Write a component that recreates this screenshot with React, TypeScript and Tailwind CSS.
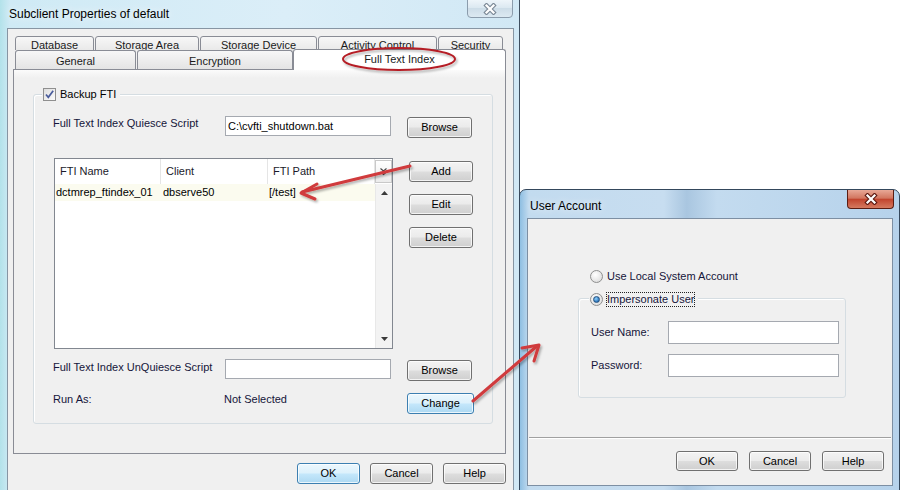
import React from 'react';

const Btn = ({ label, className = '', primary = false }: { label: string; className?: string; primary?: boolean }) => (
  <div
    className={`flex shrink-0 items-center justify-center rounded-[3px] border text-[11px] leading-[13px] text-black shadow-[inset_0_0_0_1px_rgba(255,255,255,0.75)] ${
      primary
        ? 'border-[#3c7fb1] bg-[linear-gradient(#ecf7fd,#dcf1fc_48%,#c4e7fb_52%,#add9f2)]'
        : 'border-[#707070] bg-[linear-gradient(#f3f3f3,#ebebeb_48%,#dddddd_52%,#cfcfcf)]'
    } ${className}`}
  >
    {label}
  </div>
);

const CloseGlyph = ({ active }: { active: boolean }) => (
  <svg width="14" height="12" viewBox="0 0 14 12">
    <path d="M3.5 2.5 L10.5 9.5 M10.5 2.5 L3.5 9.5" stroke={active ? '#5e1a12' : '#7b8896'} strokeWidth="4.4" strokeLinecap="square" />
    <path d="M3.5 2.5 L10.5 9.5 M10.5 2.5 L3.5 9.5" stroke="#ffffff" strokeWidth="2.2" strokeLinecap="square" />
  </svg>
);

const CheckBox = () => (
  <div className="flex h-[13px] w-[13px] shrink-0 items-center justify-center border border-[#8f8f8f] bg-[linear-gradient(135deg,#dedede,#fbfbfb)]">
    <svg width="11" height="11" viewBox="0 0 11 11">
      <path d="M2 5.5 L4.3 8.3 L9.2 1.8" stroke="#4a5c9c" strokeWidth="1.7" fill="none" />
    </svg>
  </div>
);

const Radio = ({ checked = false }: { checked?: boolean }) => (
  <div className="flex h-[13px] w-[13px] shrink-0 items-center justify-center rounded-full border border-[#8e8f8f] bg-[radial-gradient(circle_at_40%_35%,#ffffff,#d6d6d6)]">
    {checked && (
      <div className="h-[7px] w-[7px] rounded-full border border-[#26527f] bg-[radial-gradient(circle_at_40%_35%,#8fd3ff,#2c73b8_70%,#1c4f86)]" />
    )}
  </div>
);

const backTabs = [
  { label: 'Database', w: 'w-[79px]' },
  { label: 'Storage Area', w: 'w-[104px]' },
  { label: 'Storage Device', w: 'w-[117px]' },
  { label: 'Activity Control', w: 'w-[119px]' },
  { label: 'Security', w: 'w-[65px]' },
];

const MainWindow = () => (
  <div className="absolute left-0 top-0 flex h-[500px] w-[520px] flex-col border-r border-[#3f4f60] bg-[linear-gradient(90deg,#b3e2ea_0px,#cfeaf5_10px,#dbeef8_55%,#d1e8f5)]">
    <div className="relative flex h-[28px] shrink-0 items-center pl-[9px] text-[12px] leading-[14px] [text-shadow:0_0_8px_#ffffff]">
      Subclient Properties of default
      <div className="absolute -top-px right-[6px] flex h-[19px] w-[46px] items-center justify-center rounded-b-[4px] border border-[#8b9cac] bg-[linear-gradient(#eef5fa,#dae7f0_50%,#cddde8_50%,#dce9f2)]">
        <CloseGlyph active={false} />
      </div>
    </div>

    <div className="ml-[7px] w-[507px] flex-1 border border-[#8795a3] bg-[#f0f0f0] pl-[5px] pt-[7px]">
      {/* tab strip, back row */}
      <div className="flex h-[14px] gap-[1px] overflow-hidden pl-[2px]">
        {backTabs.map((t) => (
          <div
            key={t.label}
            className={`${t.w} h-[18px] shrink-0 rounded-t-[3px] border border-[#898c95] bg-[linear-gradient(#f7f7f7,#e6e6e6)] pt-[2px] text-center text-[#1a1a1a]`}
          >
            {t.label}
          </div>
        ))}
      </div>
      {/* tab strip, front row */}
      <div className="flex h-[19px] items-start gap-[1px] pl-[2px]">
        <div className="h-[19px] w-[121px] shrink-0 rounded-t-[3px] border border-b-0 border-[#898c95] bg-[linear-gradient(#f7f7f7,#e4e4e4)] pt-[4px] text-center text-[#1a1a1a]">
          General
        </div>
        <div className="h-[19px] w-[156px] shrink-0 rounded-t-[3px] border border-b-0 border-[#898c95] bg-[linear-gradient(#f7f7f7,#e4e4e4)] pt-[4px] text-center text-[#1a1a1a]">
          Encryption
        </div>
        <div className="relative z-10 -ml-[1px] -mt-[1px] h-[21px] w-[213px] shrink-0 rounded-t-[3px] border border-b-0 border-[#898c95] bg-white pt-[3px] text-center text-[#1a1a1a]">
          Full Text Index
        </div>
      </div>

      {/* tab panel */}
      <div className="h-[385px] w-[493px] border border-[#898c95] bg-[#f0f0f0] bg-[linear-gradient(#fbfbfb,#f0f0f0_8px)]">
        <div className="ml-[19px] mt-[24px] h-[330px] w-[460px] rounded-[3px] border border-[#d5dde2] shadow-[inset_1px_1px_0_#ffffff]">
          <div className="-mt-[7px] ml-[8px] flex h-[13px] w-fit items-center bg-[#f0f0f0] pl-[1px] pr-[4px]">
            <CheckBox />
            <span className="ml-[4px]">Backup FTI</span>
          </div>

          <div className="mt-[14px] flex h-[23px] pl-[19px]">
            <div className="w-[172px] shrink-0 pt-[2px] text-[#15153a]">Full Text Index Quiesce Script</div>
            <div className="mt-[1px] flex h-[20px] w-[166px] shrink-0 items-center border border-[#a5a9b0] bg-white pl-[2px]">
              C:\cvfti_shutdown.bat
            </div>
            <Btn label="Browse" className="ml-[16px] mt-[2px] h-[21px] w-[65px]" />
          </div>

          <div className="mt-[20px] flex pl-[19px]">
            <div className="ml-[1px] flex h-[191px] w-[339px] shrink-0 flex-col border border-[#828790] bg-white">
              <div className="flex h-[25px] shrink-0">
                <div className="flex w-[106px] items-center border-r border-[#e5e5e5] pl-[5px] text-[#1a1a2a]">FTI Name</div>
                <div className="flex w-[107px] items-center border-r border-[#e5e5e5] pl-[5px] text-[#1a1a2a]">Client</div>
                <div className="flex w-[107px] items-center border-r border-[#e5e5e5] pl-[5px] text-[#1a1a2a]">FTI Path</div>
                <div className="mt-[1px] flex h-[23px] w-[17px] items-center justify-center border border-[#c9c9c9] bg-[linear-gradient(#ffffff,#ececec)]">
                  <svg width="9" height="9" viewBox="0 0 9 9">
                    <path d="M1.5 1.5 L4.5 4 L7.5 1.5 M1.5 5 L4.5 7.5 L7.5 5" stroke="#444" strokeWidth="1.1" fill="none" />
                  </svg>
                </div>
              </div>
              <div className="flex flex-1">
                <div className="w-[320px]">
                  <div className="flex h-[17px] bg-[#fbfbef]">
                    <div className="flex w-[106px] items-center pl-[1px]">dctmrep_ftindex_01</div>
                    <div className="flex w-[107px] items-center pl-[2px]">dbserve50</div>
                    <div className="flex w-[107px] items-center pl-[1px]">[/test]</div>
                  </div>
                </div>
                <div className="flex w-[17px] flex-col items-center justify-between border-l border-[#e8e8e8] bg-[#f3f3f3] pb-[7px] pt-[7px]">
                  <svg width="7" height="4" viewBox="0 0 7 4">
                    <path d="M0 4 L3.5 0 L7 4 Z" fill="#3a3a3a" />
                  </svg>
                  <svg width="7" height="4" viewBox="0 0 7 4">
                    <path d="M0 0 L3.5 4 L7 0 Z" fill="#3a3a3a" />
                  </svg>
                </div>
              </div>
            </div>
            <div className="ml-[16px] mt-[3px] flex flex-col gap-[12px]">
              <Btn label="Add" className="h-[21px] w-[64px]" />
              <Btn label="Edit" className="h-[21px] w-[64px]" />
              <Btn label="Delete" className="h-[21px] w-[64px]" />
            </div>
          </div>

          <div className="mt-[10px] flex h-[22px] pl-[19px]">
            <div className="w-[172px] shrink-0 pt-[2px] text-[#15153a]">Full Text Index UnQuiesce Script</div>
            <div className="h-[20px] w-[166px] shrink-0 border border-[#a5a9b0] bg-white" />
            <Btn label="Browse" className="ml-[16px] mt-[1px] h-[21px] w-[65px]" />
          </div>

          <div className="mt-[12px] flex h-[21px] pl-[19px]">
            <div className="w-[171px] shrink-0 text-[#15153a]">Run As:</div>
            <div className="w-[167px] shrink-0 text-[#15153a]">Not Selected</div>
            <Btn label="Change" primary className="ml-[16px] h-[21px] w-[67px]" />
          </div>
        </div>
      </div>

      <div className="mt-[9px] flex w-[493px] justify-end gap-[10px]">
        <Btn label="OK" primary className="h-[21px] w-[63px]" />
        <Btn label="Cancel" className="h-[21px] w-[63px]" />
        <Btn label="Help" className="h-[21px] w-[63px]" />
      </div>
    </div>
  </div>
);

const UserAccountWindow = () => (
  <div className="absolute left-[519px] top-[189px] z-20 flex h-[310px] w-[381px] flex-col rounded-t-[7px] border border-[#34475c] bg-[linear-gradient(90deg,#8fbfe2,#c2dbef_9px,#c7ddf0_38%,#a9c6e0_44%,#c3dbef_52%,#b6d2eb)]">
    <div className="relative flex h-[28px] shrink-0 items-center pl-[10px] pt-[3px] text-[12px] leading-[14px] [text-shadow:0_0_8px_#ffffff]">
      User Account
      <div className="absolute right-[5px] top-0 flex h-[19px] w-[47px] items-center justify-center rounded-b-[4px] border border-t-0 border-[#5b1d13] bg-[linear-gradient(#e8a897,#d27660_45%,#c2452f_52%,#d57a60)]">
        <CloseGlyph active />
      </div>
    </div>
    <div className="ml-[7px] flex h-[268px] w-[366px] shrink-0 flex-col border border-[#7d8fa3] bg-[#f0f0f0]">
      <div className="ml-[62px] mt-[51px] flex h-[13px] items-center">
        <Radio />
        <span className="ml-[4px] text-[#15153a]">Use Local System Account</span>
      </div>

      <div className="ml-[50px] mt-[15px] h-[100px] w-[268px] rounded-[3px] border border-[#d5dde2] shadow-[inset_1px_1px_0_#ffffff]">
        <div className="-mt-[6px] ml-[10px] flex h-[13px] w-fit items-center bg-[#f0f0f0] pl-[1px] pr-[3px]">
          <Radio checked />
          <span className="ml-[3px] border border-dotted border-[#222] text-[#15153a]">Impersonate User</span>
        </div>
        <div className="mt-[15px] flex h-[23px] items-center pl-[12px]">
          <div className="w-[77px] shrink-0 text-[#15153a]">User Name:</div>
          <div className="h-[23px] w-[171px] shrink-0 border border-[#a5a9b0] bg-white" />
        </div>
        <div className="mt-[10px] flex h-[23px] items-center pl-[12px]">
          <div className="w-[77px] shrink-0 text-[#15153a]">Password:</div>
          <div className="h-[23px] w-[171px] shrink-0 border border-[#a5a9b0] bg-white" />
        </div>
      </div>

      <div className="ml-[1px] mt-[39px] w-[362px] border-t border-[#a0a0a0] border-b border-b-white" />

      <div className="mt-[12px] flex justify-end gap-[11px] pr-[8px]">
        <Btn label="OK" className="h-[20px] w-[62px]" />
        <Btn label="Cancel" className="h-[20px] w-[62px]" />
        <Btn label="Help" className="h-[20px] w-[62px]" />
      </div>
    </div>
  </div>
);

const Annotations = () => (
  <svg className="pointer-events-none absolute left-0 top-0 z-30" width="901" height="490" viewBox="0 0 901 490">
    <defs>
      <filter id="sh" x="-10%" y="-10%" width="130%" height="140%">
        <feDropShadow dx="1.5" dy="2" stdDeviation="1.2" floodColor="#000" floodOpacity="0.3" />
      </filter>
    </defs>
    <g filter="url(#sh)" fill="none" strokeLinecap="round" strokeLinejoin="round">
      <ellipse cx="399" cy="59" rx="56" ry="11" stroke="#b51f25" strokeWidth="2" />
      <g stroke="#d03a3c" strokeWidth="3">
        <path d="M410 166 L302 192" />
        <path d="M317 184 L301 193 L315 199" />
        <path d="M473 401 L537 346" />
        <path d="M522 348 L539 345 L534 361" />
      </g>
    </g>
  </svg>
);

export default function App() {
  return (
    <div className="relative h-[490px] w-[901px] overflow-hidden bg-white font-['Liberation_Sans',Arial,sans-serif] text-[11px] leading-[13px] text-black">
      <MainWindow />
      <UserAccountWindow />
      <Annotations />
    </div>
  );
}
